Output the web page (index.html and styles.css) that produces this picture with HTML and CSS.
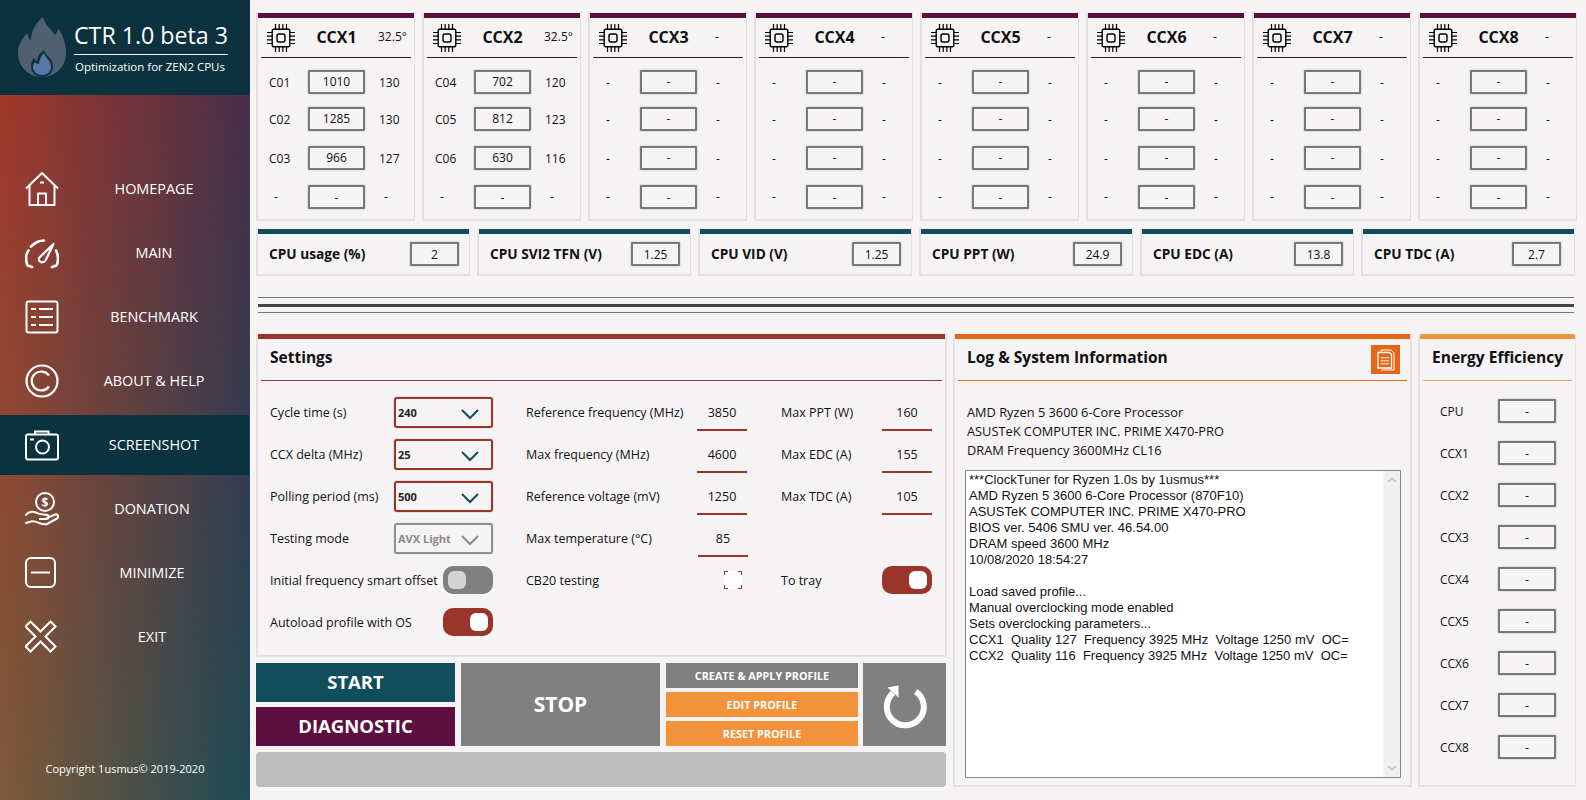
FILE: index.html
```html
<!DOCTYPE html>
<html lang="en">
<head>
<meta charset="utf-8">
<title>CTR 1.0 beta 3</title>
<link rel="stylesheet" href="styles.css">
</head>
<body>
<svg class="defs" width="0" height="0">
  <symbol id="chip" viewBox="0 0 28 28">
    <rect x="5.2" y="5.2" width="17.6" height="17.6" rx="1.5" fill="none" stroke="#000" stroke-width="1.4"/>
    <rect x="10" y="10" width="8" height="8" rx="2" fill="none" stroke="#000" stroke-width="1.4"/>
    <path d="M8.5 0v5M12.2 0v5M15.8 0v5M19.5 0v5M8.5 23v5M12.2 23v5M15.8 23v5M19.5 23v5M0 8.5h5M0 12.2h5M0 15.8h5M0 19.5h5M23 8.5h5M23 12.2h5M23 15.8h5M23 19.5h5" stroke="#000" stroke-width="1.2" fill="none"/>
  </symbol>
  <symbol id="chev" viewBox="0 0 18 12">
    <path d="M1 2l8 8 8-8" fill="none" stroke="currentColor" stroke-width="2"/>
  </symbol>
</svg>
<div class="app">
  <aside class="sidebar">
    <header class="brand">
      <svg class="logo" viewBox="0 0 48 60"><path d="M25 0C27 8 33 12 37 18 39 16 40 13 40 11 45 18 48 27 48 36 48 50 37 60 24 60 11 60 0 50 0 36 0 28 4 22 9 16 10 20 11 22 13 24 13 14 18 6 25 0Z" fill="#4f6071"/><path d="M26 33C27 38 35 41 35 49 35 56 30 60 24 60 18 60 13 56 13 49 13 46 14 43 16 41 17 43 18 44 19 44 19 40 22 36 26 33Z" fill="#0b323e"/><path d="M26 36C27 41 33 43 33 50 33 55 29 58 24 58 19 58 15 55 15 50 15 48 16 46 17 45 18 46 19 47 21 47 21 43 23 39 26 36Z" fill="#5a78a6"/></svg>
      <div class="brand-text">
        <div class="brand-title">CTR 1.0 beta 3</div>
        <div class="brand-sub">Optimization for ZEN2 CPUs</div>
      </div>
    </header>
    <nav class="nav">
      <div class="nav-item">
        <svg class="nav-icon" viewBox="0 0 34 34"><path d="M1 16.500L17 1l16 15.500M4.500 14v19h25V14M13 33V21.500h8V33M15 10.500h4" fill="none" stroke="#fff" stroke-width="2" stroke-linejoin="round"/></svg>
        <span class="nav-label">HOMEPAGE</span>
      </div>
      <div class="nav-item">
        <svg class="nav-icon" viewBox="0 0 34 34"><path d="M7 31L2.500 29.500C0.500 24 0.800 18 3.500 14.500M6 10.500C10 6.500 14 4.500 19 4.500M31 14.500C33.200 19 33.500 25 31.500 29.500L27 31" fill="none" stroke="#fff" stroke-width="2.600" stroke-linecap="round" stroke-linejoin="round"/><path d="M28.500 8L20.500 24.500C18.500 27.500 14.500 26.500 14 24 13.500 22.500 14.500 21 16 20Z" fill="none" stroke="#fff" stroke-width="2.200" stroke-linejoin="round"/></svg>
        <span class="nav-label">MAIN</span>
      </div>
      <div class="nav-item">
        <svg class="nav-icon" viewBox="0 0 34 34"><rect x="1.500" y="1.500" width="31" height="31" rx="2" fill="none" stroke="#fff" stroke-width="2"/><path d="M6 9h5M14 9h14M6 17h5M14 17h14M6 25h5M14 25h14" stroke="#fff" stroke-width="2" fill="none"/></svg>
        <span class="nav-label">BENCHMARK</span>
      </div>
      <div class="nav-item">
        <svg class="nav-icon" viewBox="0 0 34 34"><circle cx="17" cy="17" r="15.500" fill="none" stroke="#fff" stroke-width="2.200"/><path d="M24 11.500A9.500 9.500 0 1 0 24 22.500" fill="none" stroke="#fff" stroke-width="2.200"/></svg>
        <span class="nav-label">ABOUT &amp; HELP</span>
      </div>
      <div class="nav-item is-active">
        <svg class="nav-icon" viewBox="0 0 34 34"><rect x="1" y="6.500" width="32" height="25" rx="2" fill="none" stroke="#fff" stroke-width="2"/><path d="M10 6.500V3.500h13.500v3M5 11.500h4" fill="none" stroke="#fff" stroke-width="2"/><circle cx="17.500" cy="19" r="6.500" fill="none" stroke="#fff" stroke-width="2"/></svg>
        <span class="nav-label">SCREENSHOT</span>
      </div>
      <div class="nav-item">
        <svg class="nav-icon" viewBox="0 0 34 34"><circle cx="20" cy="10" r="9" fill="none" stroke="#fff" stroke-width="2"/><text x="20" y="14.500" class="dollar">$</text><path d="M1 23C4 19 8 19 12 21 15 23 19 22 22 23 25 24 24 27 21 27H15M22 26L30 22.500C33 21.500 34 25 32 26.500L22 32C16 34 12 28 6 29.500L1 31" fill="none" stroke="#fff" stroke-width="2" stroke-linejoin="round" stroke-linecap="round"/></svg>
        <span class="nav-label nav-shift">DONATION</span>
      </div>
      <div class="nav-item">
        <svg class="nav-icon" viewBox="0 0 34 34"><rect x="1" y="2" width="29" height="29" rx="5" fill="none" stroke="#fff" stroke-width="2"/><path d="M6 16.500h19" stroke="#fff" stroke-width="2"/></svg>
        <span class="nav-label nav-shift">MINIMIZE</span>
      </div>
      <div class="nav-item">
        <svg class="nav-icon" viewBox="0 0 34 34"><path d="M5.500 1.500L15.500 11.500 25.500 1.500 30.500 6.500 20.500 16.500 30.500 26.500 25.500 31.500 15.500 21.500 5.500 31.500 0.500 26.500 10.500 16.500 0.500 6.500Z" fill="none" stroke="#fff" stroke-width="2"/></svg>
        <span class="nav-label nav-shift">EXIT</span>
      </div>
    </nav>
    <footer class="copyright">Copyright 1usmus© 2019-2020</footer>
  </aside>

  <main class="main">
    <section class="ccx-row">
      <article class="ccx">
        <div class="bar bar-maroon"></div>
        <div class="ccx-head"><svg class="chip"><use href="#chip"/></svg><b class="ccx-name">CCX1</b><span class="ccx-temp">32.5°</span></div>
        <div class="ccx-grid">
          <span>C01</span><span class="box">1010</span><span>130</span>
          <span>C02</span><span class="box">1285</span><span>130</span>
          <span>C03</span><span class="box">966</span><span>127</span>
          <span class="dash">-</span><span class="box">-</span><span class="dash">-</span>
        </div>
      </article>
      <article class="ccx">
        <div class="bar bar-maroon"></div>
        <div class="ccx-head"><svg class="chip"><use href="#chip"/></svg><b class="ccx-name">CCX2</b><span class="ccx-temp">32.5°</span></div>
        <div class="ccx-grid">
          <span>C04</span><span class="box">702</span><span>120</span>
          <span>C05</span><span class="box">812</span><span>123</span>
          <span>C06</span><span class="box">630</span><span>116</span>
          <span class="dash">-</span><span class="box">-</span><span class="dash">-</span>
        </div>
      </article>
      <article class="ccx">
        <div class="bar bar-maroon"></div>
        <div class="ccx-head"><svg class="chip"><use href="#chip"/></svg><b class="ccx-name">CCX3</b><span class="ccx-temp dash">-</span></div>
        <div class="ccx-grid">
          <span class="dash">-</span><span class="box">-</span><span class="dash">-</span>
          <span class="dash">-</span><span class="box">-</span><span class="dash">-</span>
          <span class="dash">-</span><span class="box">-</span><span class="dash">-</span>
          <span class="dash">-</span><span class="box">-</span><span class="dash">-</span>
        </div>
      </article>
      <article class="ccx">
        <div class="bar bar-maroon"></div>
        <div class="ccx-head"><svg class="chip"><use href="#chip"/></svg><b class="ccx-name">CCX4</b><span class="ccx-temp dash">-</span></div>
        <div class="ccx-grid">
          <span class="dash">-</span><span class="box">-</span><span class="dash">-</span>
          <span class="dash">-</span><span class="box">-</span><span class="dash">-</span>
          <span class="dash">-</span><span class="box">-</span><span class="dash">-</span>
          <span class="dash">-</span><span class="box">-</span><span class="dash">-</span>
        </div>
      </article>
      <article class="ccx">
        <div class="bar bar-maroon"></div>
        <div class="ccx-head"><svg class="chip"><use href="#chip"/></svg><b class="ccx-name">CCX5</b><span class="ccx-temp dash">-</span></div>
        <div class="ccx-grid">
          <span class="dash">-</span><span class="box">-</span><span class="dash">-</span>
          <span class="dash">-</span><span class="box">-</span><span class="dash">-</span>
          <span class="dash">-</span><span class="box">-</span><span class="dash">-</span>
          <span class="dash">-</span><span class="box">-</span><span class="dash">-</span>
        </div>
      </article>
      <article class="ccx">
        <div class="bar bar-maroon"></div>
        <div class="ccx-head"><svg class="chip"><use href="#chip"/></svg><b class="ccx-name">CCX6</b><span class="ccx-temp dash">-</span></div>
        <div class="ccx-grid">
          <span class="dash">-</span><span class="box">-</span><span class="dash">-</span>
          <span class="dash">-</span><span class="box">-</span><span class="dash">-</span>
          <span class="dash">-</span><span class="box">-</span><span class="dash">-</span>
          <span class="dash">-</span><span class="box">-</span><span class="dash">-</span>
        </div>
      </article>
      <article class="ccx">
        <div class="bar bar-maroon"></div>
        <div class="ccx-head"><svg class="chip"><use href="#chip"/></svg><b class="ccx-name">CCX7</b><span class="ccx-temp dash">-</span></div>
        <div class="ccx-grid">
          <span class="dash">-</span><span class="box">-</span><span class="dash">-</span>
          <span class="dash">-</span><span class="box">-</span><span class="dash">-</span>
          <span class="dash">-</span><span class="box">-</span><span class="dash">-</span>
          <span class="dash">-</span><span class="box">-</span><span class="dash">-</span>
        </div>
      </article>
      <article class="ccx">
        <div class="bar bar-maroon"></div>
        <div class="ccx-head"><svg class="chip"><use href="#chip"/></svg><b class="ccx-name">CCX8</b><span class="ccx-temp dash">-</span></div>
        <div class="ccx-grid">
          <span class="dash">-</span><span class="box">-</span><span class="dash">-</span>
          <span class="dash">-</span><span class="box">-</span><span class="dash">-</span>
          <span class="dash">-</span><span class="box">-</span><span class="dash">-</span>
          <span class="dash">-</span><span class="box">-</span><span class="dash">-</span>
        </div>
      </article>
    </section>

    <section class="metric-row">
      <article class="metric"><div class="bar bar-teal"></div><div class="metric-body"><b>CPU usage (%)</b><span class="box box-sm">2</span></div></article>
      <article class="metric"><div class="bar bar-teal"></div><div class="metric-body"><b>CPU SVI2 TFN (V)</b><span class="box box-sm">1.25</span></div></article>
      <article class="metric"><div class="bar bar-teal"></div><div class="metric-body"><b>CPU VID (V)</b><span class="box box-sm">1.25</span></div></article>
      <article class="metric"><div class="bar bar-teal"></div><div class="metric-body"><b>CPU PPT (W)</b><span class="box box-sm">24.9</span></div></article>
      <article class="metric"><div class="bar bar-teal"></div><div class="metric-body"><b>CPU EDC (A)</b><span class="box box-sm">13.8</span></div></article>
      <article class="metric metric-last"><div class="bar bar-teal"></div><div class="metric-body"><b>CPU TDC (A)</b><span class="box box-sm">2.7</span></div></article>
    </section>

    <div class="rules"><hr class="rule"><hr class="rule rule-thick"><hr class="rule"></div>

    <section class="lower">
      <div class="left-col">
        <article class="panel settings">
          <div class="bar bar-rust"></div>
          <header class="panel-head head-rust"><h2>Settings</h2></header>
          <div class="settings-grid">
            <div class="field"><span>Cycle time (s)</span><span class="select">240<svg class="chev"><use href="#chev"/></svg></span></div>
            <div class="field"><span>Reference frequency (MHz)</span><span class="num">3850</span></div>
            <div class="field"><span>Max PPT (W)</span><span class="num">160</span></div>

            <div class="field"><span>CCX delta (MHz)</span><span class="select">25<svg class="chev"><use href="#chev"/></svg></span></div>
            <div class="field"><span>Max frequency (MHz)</span><span class="num">4600</span></div>
            <div class="field"><span>Max EDC (A)</span><span class="num">155</span></div>

            <div class="field"><span>Polling period (ms)</span><span class="select">500<svg class="chev"><use href="#chev"/></svg></span></div>
            <div class="field"><span>Reference voltage (mV)</span><span class="num">1250</span></div>
            <div class="field"><span>Max TDC (A)</span><span class="num">105</span></div>

            <div class="field"><span>Testing mode</span><span class="select is-disabled">AVX Light<svg class="chev"><use href="#chev"/></svg></span></div>
            <div class="field"><span>Max temperature (°C)</span><span class="num num-shift">85</span></div>
            <div class="field"></div>

            <div class="field"><span>Initial frequency smart offset</span><span class="toggle is-off"><i></i></span></div>
            <div class="field"><span>CB20 testing</span><span class="check"></span></div>
            <div class="field"><span>To tray</span><span class="toggle toggle-end"><i></i></span></div>

            <div class="field"><span>Autoload profile with OS</span><span class="toggle"><i></i></span></div>
          </div>
        </article>
        <div class="actions">
          <div class="act-col act-col-a">
            <button class="btn btn-big btn-teal">START</button>
            <button class="btn btn-big btn-maroon">DIAGNOSTIC</button>
          </div>
          <button class="btn btn-stop">STOP</button>
          <div class="act-col act-col-b">
            <button class="btn btn-small btn-gray">CREATE &amp; APPLY PROFILE</button>
            <button class="btn btn-small btn-orange">EDIT PROFILE</button>
            <button class="btn btn-small btn-orange">RESET PROFILE</button>
          </div>
          <button class="btn btn-refresh" aria-label="Refresh">
            <svg class="refresh" viewBox="0 0 44 44"><path d="M32.700 8.500A18.500 18.500 0 1 1 10 10" fill="none" stroke="#fff" stroke-width="6"/><path d="M4.500 4.500L15.500 2.500V14.500Z" fill="#fff"/></svg>
          </button>
        </div>
        <div class="progress"></div>
      </div>

      <article class="panel log">
        <div class="bar bar-orange"></div>
        <header class="panel-head head-orange">
          <h2>Log &amp; System Information</h2>
          <span class="copy-btn"><svg viewBox="0 0 18 22" width="18" height="22"><path d="M4 3V1h10l3 3v17H4" fill="none" stroke="#fff" stroke-width="1"/><path d="M1 3.500h11.500l2 2V19H1z" fill="#e3651a" stroke="#fff" stroke-width="1.300"/><path d="M3.500 8h8.500v1.500H3.500zM3.500 11h8.500v1.500H3.500zM3.500 14h8.500v1.500H3.500z" fill="#f3c2a0"/></svg></span>
        </header>
        <div class="sysinfo">
          <div>AMD Ryzen 5 3600 6-Core Processor</div>
          <div>ASUSTeK COMPUTER INC. PRIME X470-PRO</div>
          <div>DRAM Frequency 3600MHz CL16</div>
        </div>
        <div class="logbox">
          <pre class="logtext">***ClockTuner for Ryzen 1.0s by 1usmus***
AMD Ryzen 5 3600 6-Core Processor (870F10)
ASUSTeK COMPUTER INC. PRIME X470-PRO
BIOS ver. 5406 SMU ver. 46.54.00
DRAM speed 3600 MHz
10/08/2020 18:54:27

Load saved profile...
Manual overclocking mode enabled
Sets overclocking parameters...
CCX1  Quality 127  Frequency 3925 MHz  Voltage 1250 mV  OC=
CCX2  Quality 116  Frequency 3925 MHz  Voltage 1250 mV  OC=</pre>
          <div class="scrollbar">
            <svg class="sb-arrow" viewBox="0 0 10 6"><path d="M1 5l4-4 4 4" fill="none" stroke="#c4c4c4" stroke-width="1.600"/></svg>
            <svg class="sb-arrow" viewBox="0 0 10 6"><path d="M1 1l4 4 4-4" fill="none" stroke="#c4c4c4" stroke-width="1.600"/></svg>
          </div>
        </div>
      </article>

      <article class="panel energy">
        <div class="bar bar-light"></div>
        <header class="panel-head head-light head-center"><h2>Energy Efficiency</h2></header>
        <div class="energy-grid">
          <span>CPU</span><span class="box">-</span>
          <span>CCX1</span><span class="box">-</span>
          <span>CCX2</span><span class="box">-</span>
          <span>CCX3</span><span class="box">-</span>
          <span>CCX4</span><span class="box">-</span>
          <span>CCX5</span><span class="box">-</span>
          <span>CCX6</span><span class="box">-</span>
          <span>CCX7</span><span class="box">-</span>
          <span>CCX8</span><span class="box">-</span>
        </div>
      </article>
    </section>
  </main>
</div>
</body>
</html>
```
FILE: styles.css
```css
* { box-sizing: border-box; }
html, body { margin: 0; height: 100%; }
body {
  background: #f5f3f4;
  color: #111;
  font-family: "Open Sans", "Noto Sans", sans-serif;
  font-size: 12px;
  overflow: hidden;
}
.defs { position: absolute; }
.app { display: flex; width: 1586px; height: 800px; }

/* Sidebar */
.sidebar {
  position: relative;
  width: 250px;
  height: 800px;
  flex: none;
  display: flex;
  flex-direction: column;
  color: #fff;
  background: linear-gradient(to right, #a2392b, #482f4a);
}
.sidebar::before {
  content: "";
  position: absolute;
  inset: 0;
  background: linear-gradient(to right, #7e5a3a, #1d4a56);
  -webkit-mask-image: linear-gradient(to bottom, transparent 95px, #000 100%);
  mask-image: linear-gradient(to bottom, transparent 95px, #000 100%);
}
.sidebar > * { position: relative; }
.brand {
  height: 95px;
  background: #0b323e;
  display: flex;
  padding: 17px 0 0 18px;
}
.logo { width: 48px; height: 60px; flex: none; }
.brand-text { margin-left: 8px; width: 154px; }
.brand-title {
  font-size: 23.2px;
  line-height: 30px;
  margin-top: 3px;
  padding-bottom: 4px;
  border-bottom: 1px solid #fff;
  white-space: nowrap;
}
.brand-sub { font-size: 11.5px; line-height: 16px; margin: 4px 0 0 1px; white-space: nowrap; }
.nav { margin-top: 64px; display: flex; flex-direction: column; gap: 4px; }
.nav-item {
  height: 60px;
  width: 249px;
  padding-left: 25px;
  display: flex;
  align-items: center;
}
.nav-item.is-active { background: #0b323e; }
.nav-icon { width: 34px; height: 34px; flex: none; }
.dollar { fill: #fff; font: bold 12px "Open Sans", sans-serif; text-anchor: middle; }
.nav-label { flex: 1; text-align: center; font-size: 14.4px; padding-bottom: 1px; }
.nav-shift { padding-right: 4px; }
.copyright {
  margin-top: auto;
  margin-bottom: 23px;
  text-align: center;
  font-size: 11px;
  line-height: 16px;
}

/* Main */
.main { flex: 1; padding: 13px 0 0 6px; min-width: 0; }
.bar { height: 5px; }
.bar-maroon { background: #5c0f3e; }
.bar-teal { background: #124d5c; }
.bar-rust { background: #99352b; }
.bar-orange { background: #e3651a; }
.bar-light { background: #f2923a; border-radius: 2px 2px 0 0; }

.box {
  display: flex;
  align-items: center;
  justify-content: center;
  width: 57px;
  height: 24px;
  border: 2px solid #787878;
  border-radius: 1px;
  box-shadow: 0 0 1.5px #8c8c8c;
}
.box-sm { width: 49px; flex: none; padding: 1px 0 0; }

/* CCX cards */
.ccx-row { display: flex; gap: 7px; }
.ccx, .metric, .panel {
  border: solid #e3e1e3;
  border-width: 0 1px 2px 2px;
}
.ccx { width: 159px; height: 208px; }
.ccx-head {
  height: 40px;
  margin: 0 3px;
  padding-left: 6px;
  border-bottom: 1px solid #4a0f35;
  display: grid;
  grid-template-columns: 28px 83px auto;
  align-items: center;
}
.chip { width: 28px; height: 28px; }
.ccx-name { text-align: center; font-size: 16px; padding-bottom: 1px; }
.ccx-temp { padding-bottom: 2px; }
.ccx-grid {
  display: grid;
  grid-template-columns: 39px 57px auto;
  grid-template-rows: 37px 39px 39px 24px;
  padding: 12px 0 0 11px;
  line-height: 26px;
}
.ccx-grid > span:nth-child(3n) { margin-left: 14px; }
.ccx-grid > span:nth-last-child(-n+3) { line-height: 23px; }
.dash { padding-left: 5px; }

/* Metrics */
.metric-row { display: flex; gap: 7px; margin-top: 8px; }
.metric { width: 214px; height: 47px; }
.metric-body {
  height: 40px;
  display: flex;
  align-items: center;
  justify-content: space-between;
  padding: 0 10px 0 11px;
  font-size: 13.7px;
}
.metric-body b { padding-bottom: 2px; }
.metric-last .metric-body { padding-right: 13px; }
.metric-body .box { font-size: 12px; }

/* Rules */
.rules { margin: 21px 0 0 2px; width: 1316px; }
.rule { margin: 0; border: 0; height: 1px; background: #777; }
.rule-thick { height: 3px; margin: 6px 0 5px; background: #444; }

/* Lower */
.lower { display: flex; gap: 6px; margin-top: 21px; }
.left-col { width: 691px; flex: none; }
.panel { border-width: 0 2px 2px 2px; }
.panel-head {
  height: 42px;
  margin: 0 3px;
  padding-left: 9px;
  display: flex;
  align-items: center;
  justify-content: space-between;
  border-bottom: 1px solid;
}
.panel-head h2 { margin: 0; padding-bottom: 6px; font-size: 15.5px; font-weight: 700; line-height: 20px; }
.head-rust { border-color: #99352b; }
.head-orange { border-color: #e3651a; padding-right: 7px; }
.head-light { border-color: #eea066; }
.head-center { justify-content: center; padding: 0; }

.settings { height: 323px; }
.settings-grid {
  display: grid;
  grid-template-columns: 223px 222px 152px;
  grid-auto-rows: 42px;
  column-gap: 33px;
  padding: 10px 0 0 12px;
  font-size: 12.5px;
}
.field { display: flex; align-items: center; justify-content: space-between; white-space: nowrap; }
.select {
  width: 99px;
  height: 31px;
  padding-left: 2px;
  border: 2px solid #99352b;
  border-radius: 3px;
  box-shadow: 0 0 1px #99352b;
  display: flex;
  align-items: center;
  justify-content: space-between;
  font-size: 11px;
  font-weight: 700;
  color: #222;
}
.chev { width: 18px; height: 12px; margin-right: 12px; color: #124d5c; margin-top: 3px; }
.select.is-disabled { border-color: #8f9090; color: #8a8a8a; box-shadow: 0 0 1px #8f9090; }
.is-disabled .chev { color: #8a8a8a; }
.num {
  width: 50px;
  height: 37px;
  margin: 1px 1px 0 0;
  border-bottom: 2px solid #99352b;
  text-align: center;
  line-height: 37px;
}
.num-shift { margin-right: 0; }
.toggle {
  width: 50px;
  height: 28px;
  border-radius: 10px;
  background: #99352b;
  display: flex;
  align-items: center;
  justify-content: flex-end;
  padding: 0 5px;
}
.toggle i { width: 18px; height: 18px; border-radius: 6px; background: #fff; }
.toggle.is-off { background: #808080; justify-content: flex-start; }
.toggle.is-off i { background: #d3d3d3; }
.toggle-end { margin-right: 1px; }
.check {
  width: 18px;
  height: 18px;
  margin-right: 6px;
  --c: #99352b;
  background-color: #fff;
  background-image:
    linear-gradient(var(--c), var(--c)), linear-gradient(var(--c), var(--c)),
    linear-gradient(var(--c), var(--c)), linear-gradient(var(--c), var(--c)),
    linear-gradient(var(--c), var(--c)), linear-gradient(var(--c), var(--c)),
    linear-gradient(var(--c), var(--c)), linear-gradient(var(--c), var(--c));
  background-repeat: no-repeat;
  background-size: 4px 1px, 1px 4px, 4px 1px, 1px 4px, 4px 1px, 1px 4px, 4px 1px, 1px 4px;
  background-position: 0 0, 0 0, 100% 0, 100% 0, 0 100%, 0 100%, 100% 100%, 100% 100%;
}

.actions { display: flex; height: 83px; margin-top: 6px; }
.act-col { display: flex; flex-direction: column; }
.act-col-a { width: 199px; gap: 5px; }
.act-col-b { width: 192px; gap: 4px; margin: 0 5px 0 6px; }
.btn {
  border: 0;
  padding: 0;
  color: #fff;
  font-family: inherit;
  font-weight: 700;
  display: flex;
  align-items: center;
  justify-content: center;
}
.btn-big { height: 39px; font-size: 18.5px; padding-bottom: 2px; }
.btn-teal { background: #124d5c; }
.btn-maroon { background: #5c0f3e; }
.btn-stop { width: 199px; margin-left: 6px; background: #808080; font-size: 21px; padding-bottom: 2px; }
.btn-small { height: 25px; font-size: 10.8px; }
.btn-gray { background: #808080; }
.btn-orange { background: #f2923a; }
.btn-refresh { width: 83px; background: #808080; }
.refresh { width: 44px; height: 44px; overflow: visible; }
.progress { width: 690px; height: 35px; margin-top: 6px; background: #bdbdbd; border-radius: 4px; }

.log { width: 459px; height: 453px; flex: none; }
.copy-btn {
  width: 29px;
  height: 29px;
  background: #e3651a;
  display: flex;
  align-items: center;
  justify-content: center;
}
.sysinfo { padding: 22px 0 0 12px; line-height: 19px; font-size: 12.8px; }
.logbox {
  width: 436px;
  height: 308px;
  margin: 10px 0 0 10px;
  border: 1px solid #7f868c;
  background: #fff;
  display: flex;
  justify-content: space-between;
}
.logtext {
  margin: 0;
  padding: 1px 0 0 3px;
  font: 13px/16px "Liberation Sans", Arial, sans-serif;
  color: #111;
}
.scrollbar {
  width: 17px;
  background: #f0f0f0;
  display: flex;
  flex-direction: column;
  justify-content: space-between;
  align-items: center;
  padding: 6px 0;
}
.sb-arrow { width: 10px; height: 6px; }

.energy { width: 158px; height: 453px; flex: none; border-right-width: 1px; }
.energy-grid {
  display: grid;
  grid-template-columns: 58px 58px;
  grid-auto-rows: 24px;
  row-gap: 18px;
  align-items: center;
  padding: 18px 0 0 20px;
}
.energy-grid .box { width: 58px; }
```
